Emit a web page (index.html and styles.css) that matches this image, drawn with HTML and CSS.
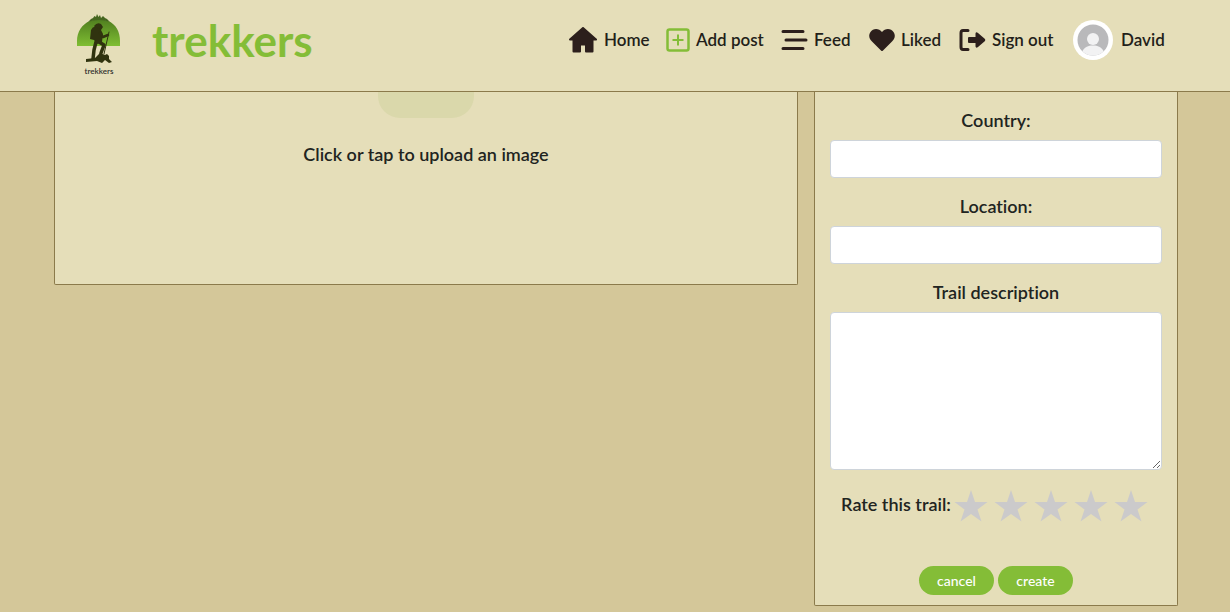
FILE: index.html
```html
<!DOCTYPE html>
<html lang="en">
<head>
<meta charset="utf-8">
<meta name="viewport" content="width=device-width, initial-scale=1">
<title>trekkers</title>
<link rel="stylesheet" href="styles.css">
</head>
<body>
<header class="site-header">
  <a class="brand" href="#">
    <span class="logo">
      <svg class="logo-art" viewBox="0 0 46 54" aria-hidden="true">
        <defs><linearGradient id="hill" x1="0" y1="0" x2="0" y2="1"><stop offset="0" stop-color="#4f7d1f"/><stop offset="1" stop-color="#7fbe33"/></linearGradient></defs>
        <path fill="url(#hill)" d="M1 33V28C1 19 6 11 14 8Q23 4 32 8C40 11 44 19 44 28V33Z"/>
        <path fill="#45661f" d="M12 9L15 6 17 5 18.500 3 20 4 21 1 22.500 4 24 2 25 5 27 3 29 5 31 6 34 9Q23 5 12 9Z"/>
        <g fill="#30330f" stroke="#30330f" stroke-linecap="round" stroke-linejoin="round">
          <path stroke="none" d="M18 13Q21 9 25 11L27 14 25 17 22 18Z"/>
          <path stroke="none" d="M15 17Q17 13 20 14L25 17 27 21 26 29 21 31 18 27 14 26Z"/>
          <path fill="none" stroke-width="2.500" d="M24 20L27 24 32 22"/>
          <path fill="none" stroke-width="3.500" d="M20 29L18 37 17 46M23 29L28 32 25 40"/>
          <path fill="none" stroke-width="1" d="M33 19L28 41"/>
          <path stroke="none" d="M10 46L19 45 22 42 24 40 29 42 31 41 33 43 33 46 36 49 33 50 29 47 26 50 21 48 10 49Z"/>
        </g>
      </svg>
      <span class="logo-name">trekkers</span>
    </span>
    <span class="brand-name">trekkers</span>
  </a>
  <nav class="main-nav" aria-label="Main">
    <a class="nav-link" href="#"><svg width="30" height="26" viewBox="0 0 30 26" aria-hidden="true"><path d="M15 1L28 12.500H24.500V24.500H18V17.500H12V24.500H5.500V12.500H2Z" fill="#2c1f1c" stroke="#2c1f1c" stroke-width="2" stroke-linejoin="round"/></svg>Home</a>
    <a class="nav-link" href="#"><svg width="24" height="24" viewBox="0 0 24 24" fill="none" stroke="#84bd37" aria-hidden="true"><rect x="1.500" y="1.500" width="21" height="21" rx="2" stroke-width="2.500"/><path d="M12 6.500V17.500M6.500 12H17.500" stroke-width="2"/></svg>Add post</a>
    <a class="nav-link" href="#"><svg width="27" height="22" viewBox="0 0 27 22" fill="none" stroke="#2c1f1c" stroke-width="3" stroke-linecap="round" aria-hidden="true"><path d="M2 2.500H22M5 11H25M2 19.500H22"/></svg>Feed</a>
    <a class="nav-link" href="#"><svg width="26" height="24" viewBox="0 0 26 24" fill="#2c1f1c" aria-hidden="true"><path d="M13 4C10 0 4 0 1.500 4C-1 8 .5 11 3 13.500L12 22.500Q13 23.500 14 22.500L23 13.500C25.500 11 27 8 24.500 4C22 0 16 0 13 4Z"/></svg>Liked</a>
    <a class="nav-link" href="#"><svg width="27" height="24" viewBox="0 0 27 24" fill="#2c1f1c" aria-hidden="true"><path d="M9 2.500H4Q2 2.500 2 5V19Q2 21.500 4 21.500H9" fill="none" stroke="#2c1f1c" stroke-width="3" stroke-linecap="round"/><path d="M10 9H16.500V5.500Q17 3.500 19 5L26 11Q26.500 12 26 13L19 19Q17 20.500 16.500 18.500V15H10Q9 15 9 14V10Q9 9 10 9Z"/></svg>Sign out</a>
    <a class="nav-link nav-profile" href="#"><svg width="40" height="40" viewBox="0 0 40 40" aria-hidden="true"><defs><clipPath id="face"><circle cx="20" cy="20" r="15.500"/></clipPath></defs><circle cx="20" cy="20" r="20" fill="#fff"/><g clip-path="url(#face)"><path fill="#b9b9bb" d="M0 0H40V40H0Z"/><circle cx="20" cy="19" r="6" fill="#f2f2f3"/><path fill="#f2f2f3" d="M8 36C9 28 14 25.500 20 25.500S31 28 32 36Z"/></g></svg>David</a>
  </nav>
</header>
<main>
  <form class="post-form">
    <section class="panel upload">
      <label class="upload-target" for="image">
        <span class="upload-icon"></span>
        Click or tap to upload an image
      </label>
      <input class="visually-hidden" id="image" type="file" accept="image/*">
    </section>
    <section class="panel details">
      <div class="field"><label for="country">Country:</label><input class="control" id="country" type="text"></div>
      <div class="field"><label for="location">Location:</label><input class="control" id="location" type="text"></div>
      <div class="field"><label for="description">Trail description</label><textarea class="control description" id="description"></textarea></div>
      <div class="rating" role="radiogroup" aria-labelledby="rate-label">
        <span class="rating-label" id="rate-label">Rate this trail:</span>
        <div class="stars">
          <label class="star"><input class="visually-hidden" type="radio" name="rating" value="1" aria-label="1 star"><svg viewBox="0 0 34 32" aria-hidden="true"><path d="M17 0L21 12H33.500L23.500 19.500L27.500 31.500L17 24L6.500 31.500L10.500 19.500L.5 12H13Z"/></svg></label>
          <label class="star"><input class="visually-hidden" type="radio" name="rating" value="2" aria-label="2 stars"><svg viewBox="0 0 34 32" aria-hidden="true"><path d="M17 0L21 12H33.500L23.500 19.500L27.500 31.500L17 24L6.500 31.500L10.500 19.500L.5 12H13Z"/></svg></label>
          <label class="star"><input class="visually-hidden" type="radio" name="rating" value="3" aria-label="3 stars"><svg viewBox="0 0 34 32" aria-hidden="true"><path d="M17 0L21 12H33.500L23.500 19.500L27.500 31.500L17 24L6.500 31.500L10.500 19.500L.5 12H13Z"/></svg></label>
          <label class="star"><input class="visually-hidden" type="radio" name="rating" value="4" aria-label="4 stars"><svg viewBox="0 0 34 32" aria-hidden="true"><path d="M17 0L21 12H33.500L23.500 19.500L27.500 31.500L17 24L6.500 31.500L10.500 19.500L.5 12H13Z"/></svg></label>
          <label class="star"><input class="visually-hidden" type="radio" name="rating" value="5" aria-label="5 stars"><svg viewBox="0 0 34 32" aria-hidden="true"><path d="M17 0L21 12H33.500L23.500 19.500L27.500 31.500L17 24L6.500 31.500L10.500 19.500L.5 12H13Z"/></svg></label>
        </div>
      </div>
      <div class="actions"><button class="btn" type="button">cancel</button><button class="btn" type="submit">create</button></div>
    </section>
  </form>
</main>
</body>
</html>
```
FILE: styles.css
```css
* { box-sizing: border-box; }
body {
  margin: 0;
  background: #d4c799;
  color: #212421;
  font: 600 18px/24px Lato, sans-serif;
  font-variant-ligatures: none;
}
.site-header {
  display: flex;
  align-items: center;
  justify-content: space-between;
  height: 92px;
  padding: 0 59px 12px 76px;
  background: #e5deb9;
  border-bottom: 1px solid #8b7a4b;
}
.brand {
  display: flex;
  align-items: center;
  gap: 30px;
  color: #84bd37;
  text-decoration: none;
}
.logo {
  display: flex;
  flex-direction: column;
  align-items: center;
  padding-top: 8px;
}
.logo-art { width: 46px; height: 54px; }
.logo-name {
  color: #30302c;
  font-size: 8px;
  line-height: 8px;
}
.brand-name {
  font-size: 44px;
  font-weight: 700;
  line-height: 48px;
}
.main-nav {
  display: grid;
  grid-template-columns: 98px 115px 88px 90px 114px 98px;
  font-size: 17px;
}
.nav-link {
  display: flex;
  align-items: center;
  gap: 6px;
  color: #231f1a;
  text-decoration: none;
  white-space: nowrap;
}
.nav-link svg { flex: none; }
.nav-profile { gap: 8px; }
.post-form {
  display: grid;
  grid-template-columns: 744fr 364fr;
  gap: 16px;
  align-items: start;
  padding: 0 52px 6px 54px;
}
.panel {
  background: #e5deb9;
  border: 1px solid #8b7a4b;
  border-top: 0;
  border-radius: 0 0 2px 2px;
}
.upload { padding-bottom: 118px; }
.upload-target {
  display: flex;
  flex-direction: column;
  align-items: center;
  gap: 24px;
}
.upload-icon {
  width: 96px;
  height: 26px;
  background: #dad8ab;
  border-radius: 0 0 22px 22px;
}
.details { padding: 16px 15px 10px; }
.field {
  display: flex;
  flex-direction: column;
  gap: 8px;
  margin-bottom: 16px;
  text-align: center;
}
.control {
  width: 100%;
  height: 38px;
  padding: 6px 12px;
  background: #fff;
  border: 1px solid #ced4da;
  border-radius: 4px;
  font: inherit;
}
.description {
  height: 158px;
  resize: vertical;
}
.rating {
  display: flex;
  align-items: flex-start;
  justify-content: center;
  padding-top: 4px;
  white-space: nowrap;
}
.rating-label { line-height: 28px; }
.stars { display: flex; }
.star {
  position: relative;
  display: flex;
  justify-content: center;
  width: 40px;
}
.star svg {
  width: 34px;
  height: 32px;
  fill: #cbcacb;
}
.actions {
  display: flex;
  justify-content: center;
  gap: 4px;
  padding-top: 44px;
}
.btn {
  width: 75px;
  height: 29px;
  padding: 0;
  background: #84bd37;
  border: 0;
  border-radius: 16px;
  color: #fff;
  font: 500 14px/20px Lato, sans-serif;
}
.visually-hidden {
  position: absolute;
  width: 1px;
  height: 1px;
  overflow: hidden;
  clip-path: inset(50%);
}
```
